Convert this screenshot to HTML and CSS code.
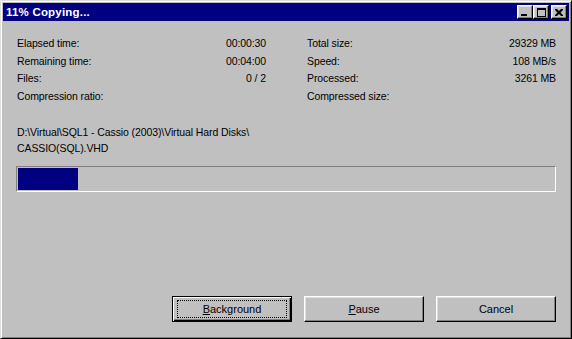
FILE: index.html
```html
<!DOCTYPE html>
<html>
    <head>
        <title>11% Copying...</title>
        <meta charset="utf-8" />
        <link rel="stylesheet" href="styles.css">
    </head>
    <body>
        <div class="window">
            <div class="titlebar">
                <span class="title">11% Copying...</span>
                <div class="title-buttons">
                    <button class="tb-btn">
                        <svg width="8" height="7" viewBox="0 0 8 7"><rect x="0" y="5" width="6" height="2" fill="#000"/></svg>
                    </button>
                    <button class="tb-btn">
                        <svg width="9" height="9" viewBox="0 0 9 9"><path d="M0 0h9v9h-9z M1 2v6h7v-6z" fill="#000" fill-rule="evenodd"/></svg>
                    </button>
                    <button class="tb-btn close">
                        <svg width="8" height="7" viewBox="0 0 8 7"><path d="M0 0h2l2 2 2-2h2v1l-2.5 2.5 2.5 2.5v1h-2l-2-2-2 2h-2v-1l2.5-2.5-2.5-2.5z" fill="#000"/></svg>
                    </button>
                </div>
            </div>
            <div class="content">
                <div class="stats">
                    <div class="col">
                        <div class="row"><span>Elapsed time:</span><span>00:00:30</span></div>
                        <div class="row"><span>Remaining time:</span><span>00:04:00</span></div>
                        <div class="row"><span>Files:</span><span>0 / 2</span></div>
                        <div class="row"><span>Compression ratio:</span><span></span></div>
                    </div>
                    <div class="col">
                        <div class="row"><span>Total size:</span><span>29329 MB</span></div>
                        <div class="row"><span>Speed:</span><span>108 MB/s</span></div>
                        <div class="row"><span>Processed:</span><span>3261 MB</span></div>
                        <div class="row"><span>Compressed size:</span><span></span></div>
                    </div>
                </div>
                <div class="path">D:\Virtual\SQL1 - Cassio (2003)\Virtual Hard Disks\<br>CASSIO(SQL).VHD</div>
                <div class="progress">
                    <div class="progress-fill" style="width: 60px"></div>
                </div>
                <div class="actions">
                    <button class="btn default"><span class="focus"><u>B</u>ackground</span></button>
                    <button class="btn"><span><u>P</u>ause</span></button>
                    <button class="btn"><span>Cancel</span></button>
                </div>
            </div>
        </div>
    </body>
</html>
```

FILE: styles.css
```css
html,
body {
    margin: 0;
    padding: 0;
    background: #c0c0c0;
    font-family: 'Liberation Sans', Arial, sans-serif;
    font-size: 10.5px;
    letter-spacing: -0.1px;
    color: #000;
}

.window {
    box-sizing: border-box;
    width: 572px;
    height: 339px;
    display: flex;
    flex-direction: column;
    background: #c0c0c0;
    border: 1px solid;
    border-color: #dfdfdf #000 #000 #dfdfdf;
    box-shadow: inset 1px 1px #fff, inset -1px -1px #808080;
    padding: 2px;
}

.titlebar {
    height: 18px;
    background: #000080;
    display: flex;
    align-items: center;
    justify-content: space-between;
    padding: 0 2px 0 3px;
}

.title {
    color: #fff;
    font-weight: bold;
    font-size: 11.5px;
    letter-spacing: 0.2px;
}

.title-buttons {
    display: flex;
}

.tb-btn {
    box-sizing: border-box;
    width: 16px;
    height: 14px;
    padding: 0;
    margin: 0;
    display: flex;
    align-items: center;
    justify-content: center;
    background: #c0c0c0;
    border: 1px solid;
    border-color: #fff #000 #000 #fff;
    box-shadow: inset -1px -1px #808080, inset 1px 1px #dfdfdf;
}

.tb-btn.close {
    margin-left: 2px;
}

.content {
    flex: 1;
    display: flex;
    flex-direction: column;
    padding: 14px 13px 14px 13px;
}

.stats {
    display: grid;
    grid-template-columns: 250px 250px;
    column-gap: 40px;
}

.row {
    display: flex;
    justify-content: space-between;
    height: 17.67px;
    line-height: 17.67px;
    padding-left: 1px;
}

.path {
    margin-top: 18px;
    line-height: 16px;
    padding-left: 1px;
}

.progress {
    box-sizing: border-box;
    margin-top: 10px;
    width: 540px;
    height: 26px;
    border: 1px solid;
    border-color: #808080 #fff #fff #808080;
    padding: 1px;
}

.progress-fill {
    height: 100%;
    background: #000080;
}

.actions {
    margin-top: auto;
    display: flex;
    justify-content: flex-end;
    gap: 12px;
}

.btn {
    box-sizing: border-box;
    width: 120px;
    height: 26px;
    margin: 0;
    padding: 0;
    display: flex;
    align-items: center;
    justify-content: center;
    background: #c0c0c0;
    font-family: inherit;
    font-size: 11px;
    letter-spacing: 0;
    color: #000;
    border: 1px solid;
    border-color: #fff #000 #000 #fff;
    box-shadow: inset -1px -1px #808080, inset 1px 1px #dfdfdf;
}

.btn.default {
    border: 1px solid #000;
    box-shadow: inset 1px 1px #fff, inset -1px -1px #000, inset -2px -2px #808080;
}

.btn .focus {
    box-sizing: border-box;
    width: 110px;
    height: 18px;
    display: flex;
    align-items: center;
    justify-content: center;
    border: 1px dotted #000;
}
```
